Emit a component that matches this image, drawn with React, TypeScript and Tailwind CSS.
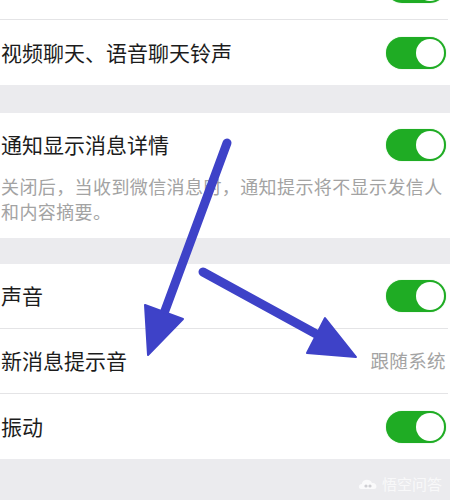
type RowProps = {
  label?: string;
  value?: string;
  on?: boolean;
  divider?: boolean;
};

function Toggle() {
  return (
    <div className="flex h-[32px] w-[60px] items-center justify-end rounded-full bg-[#1fac24] p-[2px] shadow-[0_0_1px_#7fd27f]">
      <div className="h-[28px] w-[28px] rounded-full bg-white" />
    </div>
  );
}

function Row({ label, value, on, divider }: RowProps) {
  return (
    <div
      className={
        'mr-[2px] flex h-[65px] items-center justify-between pl-[1px] pr-[2px] ' +
        (divider ? 'border-b border-[#e4e4e6]' : '')
      }
    >
      <span className="text-[21px] text-[#1c1c1c]">{label}</span>
      {on && <Toggle />}
      {value && <span className="text-[18.5px] tracking-[0.4px] text-[#a3a3a3]">{value}</span>}
    </div>
  );
}

// hand-drawn annotation arrows laid over the list
function Arrows() {
  return (
    <svg className="pointer-events-none absolute inset-0" width="450" height="500" viewBox="0 0 450 500">
      <g fill="#3e42c8" stroke="#3e42c8" strokeLinecap="round" strokeLinejoin="round">
        <line x1="227" y1="143" x2="163" y2="316" strokeWidth="9" />
        <polygon points="145,305 183,319 148,355" strokeWidth="2" />
        <line x1="203" y1="272" x2="318" y2="335" strokeWidth="9" />
        <polygon points="325,318 307,353 356,357" strokeWidth="2" />
      </g>
    </svg>
  );
}

export default function App() {
  return (
    <div className="relative h-[500px] w-[450px] overflow-hidden bg-[#ebebee] font-['Noto_Sans_CJK_SC','Noto_Sans',sans-serif]">
      <div className="-mt-[45px] bg-white">
        {/* previous row, scrolled mostly out of view */}
        <Row on divider />
        <Row label="视频聊天、语音聊天铃声" on />
      </div>

      <div className="mt-[28px] bg-white pb-[14px] pl-[1px] pr-[4px] pt-[16px]">
        <div className="flex h-[32px] items-center justify-between">
          <span className="text-[21px] text-[#1c1c1c]">通知显示消息详情</span>
          <Toggle />
        </div>
        <p className="mt-[13px] text-[18px] leading-[25px] tracking-[0.4px] text-[#a3a3a3]">
          关闭后，当收到微信消息时，通知提示将不显示发信人和内容摘要。
        </p>
      </div>

      <div className="mt-[26px] bg-white">
        <Row label="声音" on divider />
        <Row label="新消息提示音" value="跟随系统" divider />
        <Row label="振动" on />
      </div>

      <div className="absolute left-[358px] top-[473px] flex items-center gap-[4px] text-[15px] text-white/70">
        <svg width="20" height="14" viewBox="0 0 20 14">
          <path d="M3 12 C0 12 0 7 4 7 C4 2 12 1 14 6 C19 5 20 12 16 12 Z" fill="white" fillOpacity="0.75" />
          <circle cx="8" cy="9" r="1.6" fill="#cfcfd3" />
          <circle cx="12" cy="9" r="1.6" fill="#cfcfd3" />
        </svg>
        <span>悟空问答</span>
      </div>

      <Arrows />
    </div>
  );
}
